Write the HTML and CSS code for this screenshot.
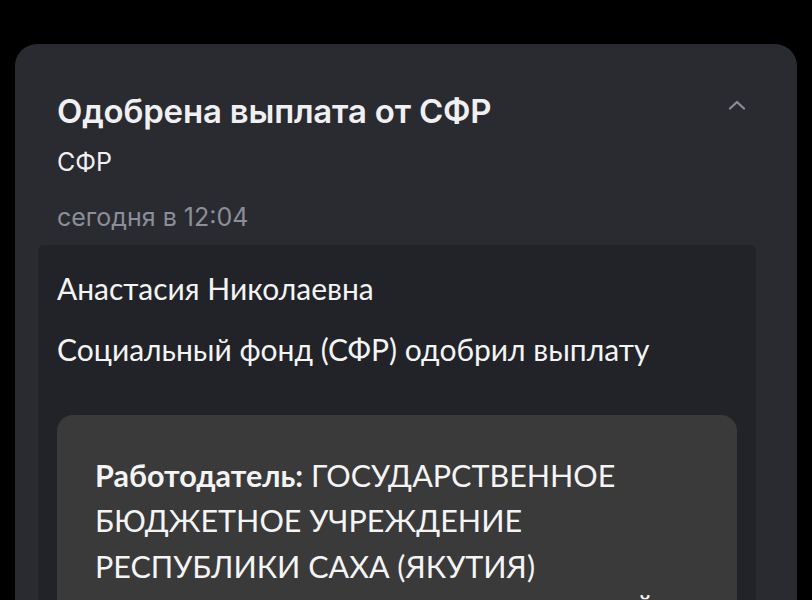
FILE: index.html
```html
<!DOCTYPE html>
<html lang="ru">
<head>
<meta charset="utf-8">
<link rel="stylesheet" href="styles.css">
</head>
<body>
<div class="card">
  <div class="header">
    <div class="head-text">
      <h1 class="title">Одобрена выплата от СФР</h1>
      <div class="sender">СФР</div>
      <div class="date">сегодня в 12:04</div>
    </div>
    <svg class="chevron" width="18" height="10" viewBox="0 0 18 10"><polyline points="2,8.5 9,2 16,8.5" fill="none" stroke="#8b8e9a" stroke-width="2.2" stroke-linecap="round" stroke-linejoin="round"/></svg>
  </div>
  <div class="panel">
    <p class="line">Анастасия Николаевна</p>
    <p class="line second">Социальный фонд (СФР) одобрил выплату</p>
    <div class="box">
      <p class="box-text"><b>Работодатель:</b> ГОСУДАРСТВЕННОЕ БЮДЖЕТНОЕ УЧРЕЖДЕНИЕ РЕСПУБЛИКИ САХА (ЯКУТИЯ) СОЦИАЛЬНО-РЕАБИЛИТАЦИОННЫЙ ЦЕНТР</p>
    </div>
  </div>
</div>
</body>
</html>
```

FILE: styles.css
```css
* { box-sizing: border-box; }
html, body { margin: 0; padding: 0; background: #000; height: 600px; overflow: hidden; }
body { font-family: "Inter", "Liberation Sans", sans-serif; color: #f0f0f2; }

.card {
  margin: 44px 15px 0 15px;
  background: #2a2b31;
  border-radius: 22px;
  padding-top: 47px;
  height: 620px;
}

.header {
  display: flex;
  justify-content: space-between;
  align-items: flex-start;
  padding: 0 51px 0 42px;
}

.title {
  margin: 0;
  font-size: 33px;
  line-height: 40px;
  font-weight: 600;
  letter-spacing: -0.2px;
  color: #f0f0f2;
}

.sender {
  margin-top: 16px;
  font-size: 25px;
  line-height: 30px;
  font-weight: 400;
  color: #f0f0f2;
}

.date {
  margin-top: 25px;
  font-size: 25px;
  line-height: 30px;
  color: #8b8e9a;
}

.chevron { margin-top: 9px; }

.panel {
  margin: 13px 41px 0 23px;
  background: #222328;
  border-radius: 6px 6px 0 0;
  padding: 25px 19px 0 19px;
  font-family: "Lato", "Liberation Sans", sans-serif;
  height: 400px;
}

.line {
  margin: 0;
  font-size: 30px;
  line-height: 36px;
  color: #f4f4f4;
}

.line.second { margin-top: 25px; }

.box {
  margin-top: 48px;
  background: #3a3a3b;
  border-radius: 16px;
  padding: 37.5px 60px 30px 38px;
}

.box-text {
  margin: 0;
  font-size: 30.5px;
  line-height: 45.5px;
  color: #f4f4f4;
}

.box-text b { font-weight: 700; }
```
